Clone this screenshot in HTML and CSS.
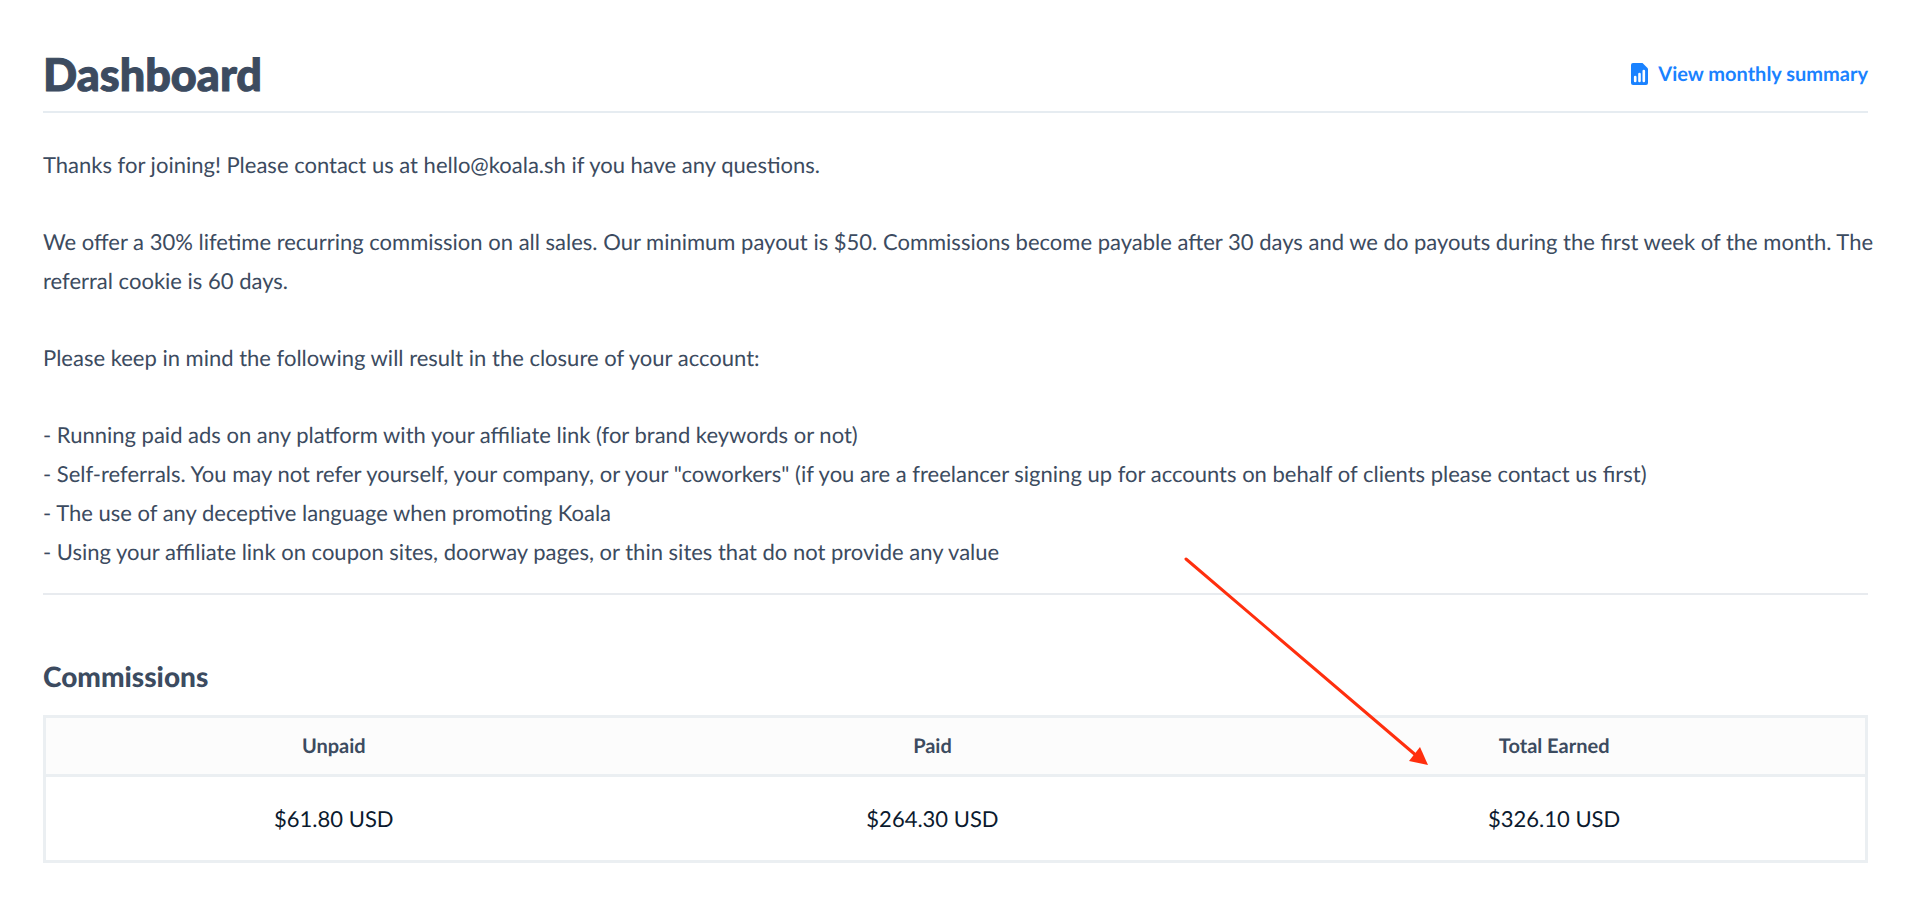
FILE: index.html
```html
<!DOCTYPE html>
<html lang="en">
<head>
    <meta charset="utf-8">
    <title>Dashboard</title>
    <link rel="stylesheet" href="styles.css">
</head>
<body>
    <main class="container">
        <header class="page-header">
            <h1>Dashboard</h1>
            <a class="summary-link" href="#summary">
                <svg class="icon" viewBox="0 0 17 22" aria-hidden="true">
                    <path fill="#1a82ff" d="M2 0h9.500l5.500 5.500V20a2 2 0 0 1-2 2H2a2 2 0 0 1-2-2V2a2 2 0 0 1 2-2z"/>
                    <path stroke="#fff" stroke-width="2.600" stroke-linecap="round" d="M4.200 14v4M8.500 11v7M12.800 8v10"/>
                </svg>
                View monthly summary
            </a>
        </header>

        <section class="intro">
            <p>Thanks for joining! Please contact us at hello@koala.sh if you have any questions.</p>
            <p class="terms">We offer a 30% lifetime recurring commission on all sales. Our minimum payout is $50. Commissions become payable after 30 days and we do payouts during the first week of the month. The referral cookie is 60 days.</p>
            <p>Please keep in mind the following will result in the closure of your account:</p>
            <p>
                - Running paid ads on any platform with your affiliate link (for brand keywords or not)<br>
                - Self-referrals. You may not refer yourself, your company, or your "coworkers" (if you are a freelancer signing up for accounts on behalf of clients please contact us first)<br>
                - The use of any deceptive language when promoting Koala<br>
                - Using your affiliate link on coupon sites, doorway pages, or thin sites that do not provide any value
            </p>
        </section>

        <section class="commissions">
            <h2>Commissions</h2>
            <table>
                <thead>
                    <tr>
                        <th>Unpaid</th>
                        <th>Paid</th>
                        <th>Total Earned</th>
                    </tr>
                </thead>
                <tbody>
                    <tr>
                        <td>$61.80 USD</td>
                        <td>$264.30 USD</td>
                        <td>$326.10 USD</td>
                    </tr>
                </tbody>
            </table>
            <!-- Arrow pointing at the total -->
            <svg class="arrow" viewBox="0 0 248 212" aria-hidden="true">
                <path stroke="#ff2f0e" stroke-width="3" stroke-linecap="round" d="M3 3l232 198"/>
                <path fill="#ff2f0e" d="M245 209l-19-4 11-14z"/>
            </svg>
        </section>
    </main>
</body>
</html>
```

FILE: styles.css
```css
body { margin: 0; font-family: Lato, sans-serif; font-size: 22px; color: #3c4b60; background-color: white; text-rendering: geometricPrecision; }
.container { padding: 42px 52px 48px 43px; }
h1, h2, p { margin: 0; }
h1, h2 { font-weight: 900; }
h1 { font-size: 45px; line-height: 64px; -webkit-text-stroke: 1px #3c4b60; }
h2 { font-size: 28px; line-height: 40px; }
.page-header { display: flex; justify-content: space-between; align-items: center; padding-bottom: 5px; border-bottom: 2px solid #e6ecf1; }
.summary-link { display: flex; align-items: center; gap: 10px; font-size: 20px; font-weight: 700; color: #1a82ff; text-decoration: none; }
.icon { width: 17px; height: 22px; }
.intro { display: flex; flex-direction: column; gap: 38px; padding: 32px 0 22px; line-height: 39px; border-bottom: 2px solid #e8ebef; }
.terms { margin-right: -12px; }
.commissions { position: relative; padding-top: 61px; }
table { width: 100%; margin-top: 19px; border: 3px solid #ebeff2; border-spacing: 0; }
th { padding: 14px 20px; font-size: 20px; line-height: 28px; font-weight: 700; background-color: #fcfcfc; border-bottom: 3px solid #ebeff2; }
td { padding: 25px 20px; line-height: 33px; text-align: center; color: #0b1a2e; }
.arrow { position: absolute; top: -39px; right: 437px; width: 248px; height: 212px; }
```
